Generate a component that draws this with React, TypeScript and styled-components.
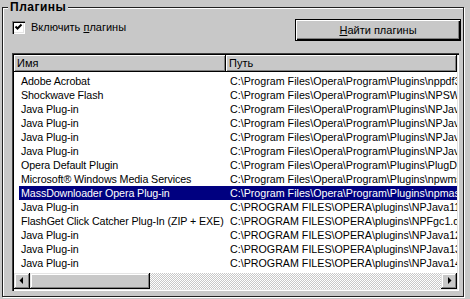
import styled, { createGlobalStyle } from "styled-components";

const FACE = "#c8c8c8";

const GlobalStyle = createGlobalStyle`
  html, body {
    margin: 0;
    padding: 0;
    background: ${FACE};
    font-family: "Liberation Sans", Arial, sans-serif;
    font-size: 11px;
    color: #000;
    overflow: hidden;
  }
`;

const OLD = "C:\\Program Files\\Opera\\Program\\Plugins\\";
const NEW = "C:\\PROGRAM FILES\\OPERA\\plugins\\";

const plugins = [
  { name: "Adobe Acrobat", path: OLD + "nppdf32.dll" },
  { name: "Shockwave Flash", path: OLD + "NPSWF32.dll" },
  { name: "Java Plug-in", path: OLD + "NPJava11.dll" },
  { name: "Java Plug-in", path: OLD + "NPJava12.dll" },
  { name: "Java Plug-in", path: OLD + "NPJava13.dll" },
  { name: "Java Plug-in", path: OLD + "NPJava14.dll" },
  { name: "Opera Default Plugin", path: OLD + "PlugDefault.dll" },
  { name: "Microsoft® Windows Media Services", path: OLD + "npwmsdrm.dll" },
  { name: "MassDownloader Opera Plug-in", path: OLD + "npmassdl.dll", selected: true },
  { name: "Java Plug-in", path: NEW + "NPJava11.dll" },
  { name: "FlashGet Click Catcher Plug-In (ZIP + EXE)", path: NEW + "NPFgc1.dll" },
  { name: "Java Plug-in", path: NEW + "NPJava12.dll" },
  { name: "Java Plug-in", path: NEW + "NPJava13.dll" },
  { name: "Java Plug-in", path: NEW + "NPJava14.dll" },
];

export default function App() {
  return (
    <>
      <GlobalStyle />
      <SPage>
        <SGroup>
          <SLegend>Плагины</SLegend>
          <SContent>
            <STopRow>
              <SCheckLabel>
                <SCheckBox>
                  <svg width="9" height="9" viewBox="0 0 9 9">
                    <path d="M1.5 3.5 L3.5 5.5 L7.5 1.5" fill="none" stroke="#000" strokeWidth="2" />
                  </svg>
                </SCheckBox>
                <span>
                  Включить <u>п</u>лагины
                </span>
              </SCheckLabel>
              <SButton>
                <u>Н</u>айти плагины
              </SButton>
            </STopRow>

            <SList>
              <SHeader>
                <SHeaderCell $width={212}>Имя</SHeaderCell>
                <SHeaderCell>Путь</SHeaderCell>
              </SHeader>
              <SBody>
                {plugins.map((p, i) => (
                  <SRow key={i} $selected={!!p.selected}>
                    <SNameCell>{p.name}</SNameCell>
                    <SPathCell>{p.path}</SPathCell>
                  </SRow>
                ))}
              </SBody>
              <SScrollBar>
                <SArrowButton>
                  <svg width="14" height="14" viewBox="0 0 14 14">
                    <polygon points="8,3 8,10 4.5,6.5" fill="#000" />
                  </svg>
                </SArrowButton>
                <SThumb />
                <STrack />
                <SArrowButton>
                  <svg width="14" height="14" viewBox="0 0 14 14">
                    <polygon points="6,3 6,10 9.5,6.5" fill="#000" />
                  </svg>
                </SArrowButton>
              </SScrollBar>
            </SList>
          </SContent>
        </SGroup>
      </SPage>
    </>
  );
}

const raised = `
  box-shadow: inset -1px -1px #000, inset 1px 1px #e4e4e4,
    inset -2px -2px #808080, inset 2px 2px #fff;
`;

const SPage = styled.div`
  width: 470px;
  height: 299px;
  padding: 0 0 0 2px;
  box-sizing: border-box;
  overflow: hidden;
`;

const SGroup = styled.fieldset`
  margin: 0;
  padding: 0;
  min-width: 0;
  width: 462px;
  height: 297px;
  box-sizing: border-box;
  border: 1px solid #202020;
  box-shadow: inset 1px 1px #fff, 1px 1px #fff;
`;

const SLegend = styled.legend`
  margin-left: 5px;
  padding: 0 2px;
  font-size: 12px;
  font-weight: bold;
  letter-spacing: 0.5px;
  line-height: 14px;
  background: ${FACE};
`;

const SContent = styled.div`
  display: flex;
  flex-direction: column;
  min-width: 0;
  padding: 5px 2px 0 9px;
`;

const STopRow = styled.div`
  display: flex;
  justify-content: space-between;
  align-items: flex-start;
`;

const SCheckLabel = styled.label`
  display: flex;
  align-items: center;
  gap: 6px;
  margin-top: 2px;
  line-height: 13px;
`;

const SCheckBox = styled.span`
  width: 13px;
  height: 13px;
  box-sizing: border-box;
  background: #fff;
  display: flex;
  align-items: center;
  justify-content: center;
  box-shadow: inset 1px 1px #808080, inset 2px 2px #000,
    inset -1px -1px #fff, inset -2px -2px #e4e4e4;
`;

const SButton = styled.button`
  width: 166px;
  height: 22px;
  padding: 0;
  border: 1px solid #000;
  background: ${FACE};
  font-family: inherit;
  font-size: 11px;
  color: #000;
  box-shadow: inset 1px 1px #fff, inset -1px -1px #000, inset -2px -2px #808080;
`;

const SList = styled.div`
  margin-top: 12px;
  margin-right: 2px;
  min-width: 0;
  height: 238px;
  padding: 2px;
  box-sizing: border-box;
  overflow: hidden;
  background: #fff;
  display: flex;
  flex-direction: column;
  box-shadow: inset 1px 1px #404040, inset 2px 2px #000,
    inset -1px -1px #fff, inset -2px -2px #e4e4e4;
`;

const SHeader = styled.div`
  display: flex;
  height: 17px;
  flex-shrink: 0;
`;

const SHeaderCell = styled.div<{ $width?: number }>`
  ${(p) => (p.$width ? `width: ${p.$width}px; flex-shrink: 0;` : "flex: 1;")}
  box-sizing: border-box;
  padding: 0 3px;
  line-height: 16px;
  background: ${FACE};
  box-shadow: inset -1px -1px #000, inset 1px 1px #fff, inset -2px -2px #808080;
`;

const SBody = styled.div`
  flex: 1;
  min-height: 0;
  overflow: hidden;
  padding-top: 2px;
  font-size: 10.7px;
`;

const SRow = styled.div<{ $selected: boolean }>`
  display: flex;
  height: 14px;
  line-height: 14px;
  margin-left: 5px;
  white-space: nowrap;
  background: ${(p) => (p.$selected ? "#000080" : "transparent")};
  color: ${(p) => (p.$selected ? "#fff" : "#000")};
`;

const SNameCell = styled.div`
  width: 207px;
  flex-shrink: 0;
  padding-left: 2px;
  box-sizing: border-box;
  overflow: hidden;
  letter-spacing: -0.1px;
`;

const SPathCell = styled.div`
  padding-left: 4px;
  flex: 1;
  min-width: 0;
  overflow: hidden;
`;

const SScrollBar = styled.div`
  display: flex;
  height: 16px;
  flex-shrink: 0;
`;

const SArrowButton = styled.div`
  width: 16px;
  height: 16px;
  flex-shrink: 0;
  background: ${FACE};
  display: flex;
  align-items: center;
  justify-content: center;
  ${raised}
`;

const SThumb = styled.div`
  width: 120px;
  flex-shrink: 0;
  background: ${FACE};
  ${raised}
`;

const STrack = styled.div`
  flex: 1;
  background-color: ${FACE};
  background-image: conic-gradient(#fff 25%, ${FACE} 0 50%, #fff 0 75%, ${FACE} 0);
  background-size: 2px 2px;
`;
